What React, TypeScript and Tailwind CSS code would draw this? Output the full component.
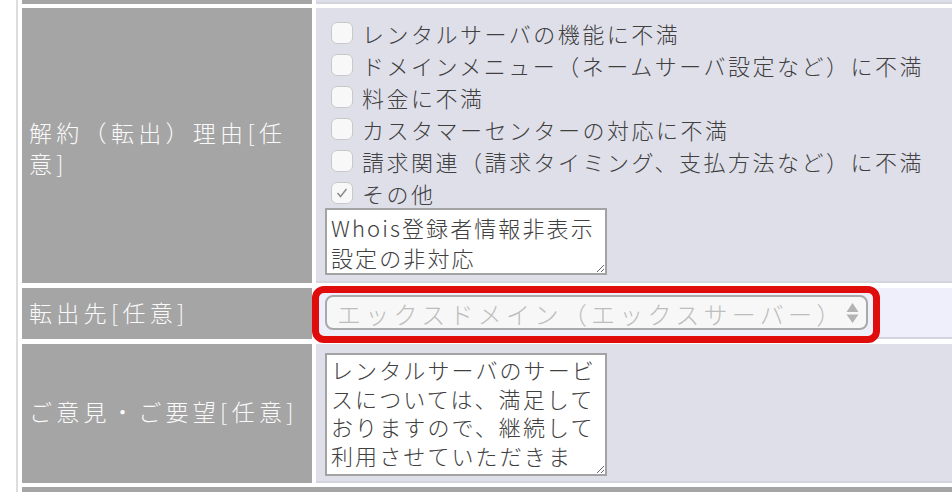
import React from "react";

const reasons = [
  { label: "レンタルサーバの機能に不満", checked: false },
  { label: "ドメインメニュー（ネームサーバ設定など）に不満", checked: false },
  { label: "料金に不満", checked: false },
  { label: "カスタマーセンターの対応に不満", checked: false },
  { label: "請求関連（請求タイミング、支払方法など）に不満", checked: false },
  { label: "その他", checked: true },
];

function Checkbox({ checked }: { checked: boolean }) {
  return (
    <span className="ml-[6px] mr-[9px] flex h-[22px] w-[22px] shrink-0 items-center justify-center rounded-[6px] border border-[#c9c9c9] bg-[#f8f8f8]">
      {checked && (
        <svg width="16" height="16" viewBox="0 0 16 16">
          <path d="M3.5 8 L6.5 11.5 L12.5 4" fill="none" stroke="#8c8c8c" strokeWidth="1.5" />
        </svg>
      )}
    </span>
  );
}

export default function App() {
  return (
    <div className="relative h-[492px] w-[952px] overflow-hidden bg-white font-['Noto_Sans_CJK_JP',sans-serif] font-light text-[#404040]">
      <div className="ml-[16px] flex h-full flex-col border-l-2 border-[#dddddd] pl-[4px]">
        {/* previous row, mostly scrolled out */}
        <div className="flex h-[4px] gap-[4px]">
          <div className="w-[290px] bg-[#a5a5a5]" />
          <div className="flex-1 border-b-2 border-[#d4d4de] bg-[#dfdfea]" />
        </div>

        {/* 解約理由 */}
        <div className="mt-[4px] flex h-[275px] gap-[4px]">
          <div className="flex w-[290px] flex-col justify-center bg-[#a5a5a5] px-[7px] pt-[4px] text-[23px] leading-[31px] tracking-[4.3px] text-[#fafafa]">
            <span>解約（転出）理由[任</span>
            <span>意]</span>
          </div>
          <div className="flex-1 border-b-2 border-[#d4d4de] bg-[#dfdfea] pl-[9px] pt-[9px]">
            {reasons.map((r) => (
              <div key={r.label} className="flex h-[32px] items-center text-[22px] tracking-[2.5px]">
                <Checkbox checked={r.checked} />
                <span className="whitespace-nowrap">{r.label}</span>
              </div>
            ))}
            <textarea
              readOnly
              defaultValue="Whois登録者情報非表示設定の非対応"
              className="-mt-[1px] block h-[67px] w-[282px] overflow-hidden border-2 border-[#a3a3a3] bg-white px-[4px] pt-[3px] text-[22px] leading-[29.5px] tracking-[2.1px] text-[#404040] outline-none"
            />
          </div>
        </div>

        {/* 転出先 */}
        <div className="mt-[5px] flex h-[51px] gap-[4px]">
          <div className="flex w-[290px] items-center bg-[#a5a5a5] px-[7px] pb-[2px] text-[23px] tracking-[4.3px] text-[#fafafa]">
            転出先[任意]
          </div>
          <div className="flex flex-1 items-center border-b-2 border-[#d4d4de] bg-[#efeffc] pl-[9px]">
            <div className="flex h-[35px] w-[543px] items-center justify-between rounded-[8px] border-2 border-[#a9a9a9] bg-[#f7f7f7] pl-[10px] pr-[6px]">
              <span className="whitespace-nowrap pt-[2px] text-[24px] tracking-[4.3px] text-[#bdbdbd]">
                エックスドメイン（エックスサーバー）
              </span>
              <svg width="15" height="24" viewBox="0 0 15 24">
                <path d="M7.5 2 L13.5 11 L1.5 11 Z" fill="#b3b3b3" />
                <path d="M7.5 22 L13.5 13.5 L1.5 13.5 Z" fill="#b3b3b3" />
              </svg>
            </div>
          </div>
        </div>

        {/* ご意見・ご要望 */}
        <div className="mt-[5px] flex h-[139px] gap-[4px]">
          <div className="flex w-[290px] items-center bg-[#a5a5a5] px-[7px] pb-[4px] text-[23px] tracking-[4.3px] text-[#fafafa]">
            ご意見・ご要望[任意]
          </div>
          <div className="flex-1 border-b-2 border-[#d4d4de] bg-[#dfdfea] pl-[9px] pt-[9px]">
            <textarea
              readOnly
              defaultValue="レンタルサーバのサービスについては、満足しておりますので、継続して利用させていただきます。"
              className="block h-[123px] w-[282px] overflow-hidden border-2 border-[#a3a3a3] bg-white px-[4px] pt-[0px] text-[22px] leading-[28.5px] tracking-[2.1px] text-[#404040] outline-none"
            />
          </div>
        </div>

        {/* next row, cut off */}
        <div className="mt-[4px] flex-1 bg-[#a5a5a5]" />
      </div>

      {/* annotation highlight */}
      <div className="pointer-events-none absolute left-[312px] top-[286px] h-[57px] w-[568px] rounded-[12px] border-[7px] border-[#e00b0b]" />
    </div>
  );
}
